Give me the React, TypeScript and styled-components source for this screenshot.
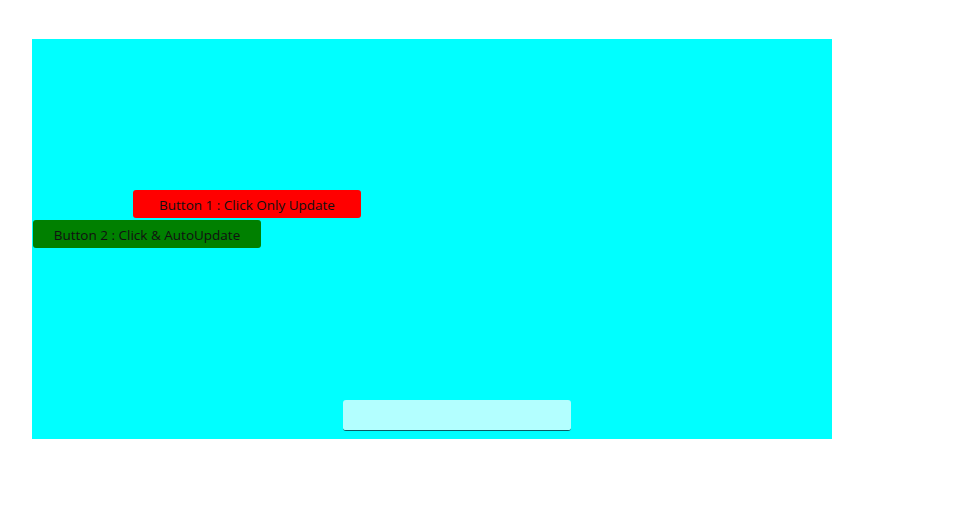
import { createGlobalStyle, styled } from 'styled-components';

const GlobalStyle = createGlobalStyle`
  body {
    margin: 0;
    background: #ffffff;
    font-family: "Open Sans", "Noto Sans", sans-serif;
  }
`;

const Page = styled.div`
  padding: 39px 0 0 32px;
`;

const Panel = styled.div`
  width: 800px;
  height: 400px;
  background: #00ffff;
  display: flex;
  flex-direction: column;
  box-sizing: border-box;
  padding-top: 151px;
`;

const ActionButton = styled.button<{ $color: string; $offset: number }>`
  width: 228px;
  height: 28px;
  margin: 0 0 2px ${({ $offset }) => $offset}px;
  padding: 1px 0 0;
  border: none;
  border-radius: 3px;
  background: ${({ $color }) => $color};
  color: #111111;
  font-family: "Open Sans", "Noto Sans", sans-serif;
  font-size: 13.5px;
  text-align: center;
  cursor: pointer;
`;

const StatusBox = styled.div`
  width: 228px;
  height: 31px;
  box-sizing: border-box;
  margin: auto 0 8px 311px;
  background: #b3ffff;
  border-radius: 3px;
  border-bottom: 1px solid #0b5f66;
`;

export default function App() {
  return (
    <>
      <GlobalStyle />
      <Page>
        <Panel>
          <ActionButton $color="#ff0000" $offset={101}>
            Button 1 : Click Only Update
          </ActionButton>
          <ActionButton $color="#008000" $offset={1}>
            Button 2 : Click &amp; AutoUpdate
          </ActionButton>
          <StatusBox />
        </Panel>
      </Page>
    </>
  );
}
